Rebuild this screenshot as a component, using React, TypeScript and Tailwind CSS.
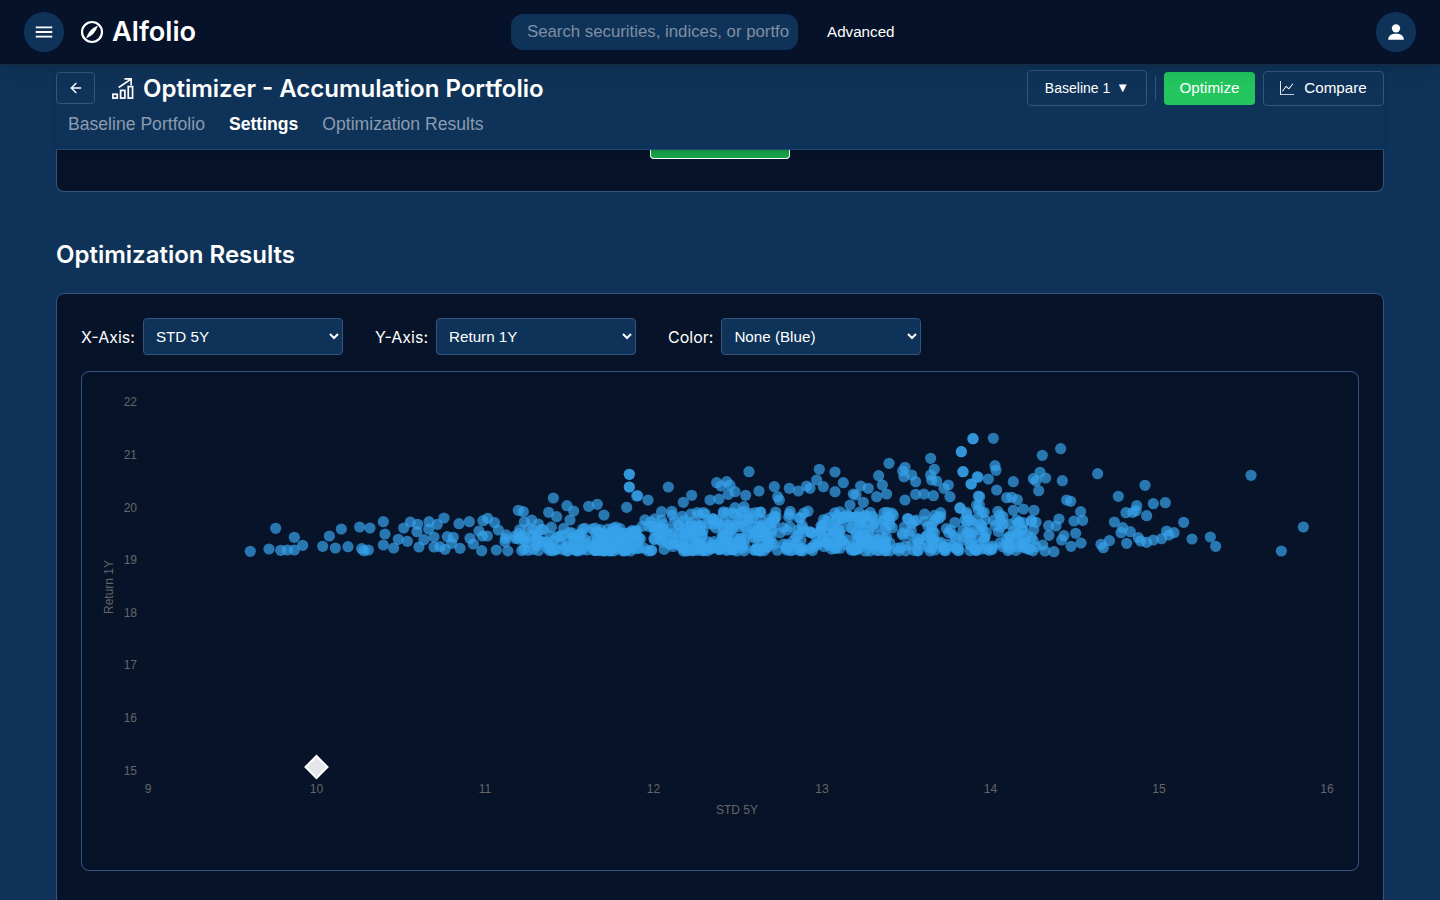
import { ArrowLeft } from "lucide-react";
import { BsGraphUp } from "react-icons/bs";
import { MdMenu } from "react-icons/md";

const xTicks = [
  { x: 148, label: "9" },
  { x: 316.5, label: "10" },
  { x: 485, label: "11" },
  { x: 653.5, label: "12" },
  { x: 822, label: "13" },
  { x: 990.5, label: "14" },
  { x: 1159, label: "15" },
  { x: 1327, label: "16" },
];
const yTicks = [
  { y: 402, label: "22" },
  { y: 455, label: "21" },
  { y: 507.5, label: "20" },
  { y: 560, label: "19" },
  { y: 613, label: "18" },
  { y: 665, label: "17" },
  { y: 718, label: "16" },
  { y: 771, label: "15" },
];

// points read off the picture, per crop: [crop x, crop y]
const left = [[31,394],[87,387],[122,391],[142,390],[163,390],[188,376],[163,352],[107,325],[248,379],[268,348],[304,327],[286,384],[324,380],[365,386],[372,392],[385,390],[359,321],[390,324],[430,305],[435,342],[430,375],[461,384],[475,358],[491,324],[511,306],[533,313],[531,335],[502,364],[537,381],[552,359],[567,305],[566,327],[592,313],[612,294],[582,351],[582,381],[657,311],[688,305],[729,302],[743,295],[764,308],[717,333],[775,330],[727,348],[742,348],[769,390],[725,392],[622,350],[640,352],[690,355],[660,385],[615,388],[600,380],[635,370],[700,372],[835,271],[850,275],[926,277],[940,234],[981,257],[1001,273],[1046,259],[1072,253],[1092,285],[1168,163],[1168,201],[1190,228],[1160,262],[950,290],[990,300],[853,306],[875,300],[895,312]];
const middle = [[28,148],[28,186],[53,212],[84,225],[145,186],[190,232],[215,211],[387,140],[290,173],[320,170],[303,183],[330,180],[345,200],[325,208],[297,222],[270,225],[377,211],[417,198],[372,245],[345,248],[463,185],[473,215],[478,225],[508,190],[535,198],[560,183],[570,190],[598,133],[590,165],[645,141],[670,173],[610,185],[645,200],[700,207],[722,183],[745,190],[708,210],[776,152],[787,180],[807,115],[800,207],[770,215],[730,232],[690,240],[855,127],[848,138],[875,150],[852,155],[887,170],[887,208],[912,207],[940,212],[855,225],[932,100],[943,133],[932,150],[935,165],[950,168],[1059,41],[1024,80],[1029,140],[1053,177],[1072,155],[985,180],[972,190],[990,215],[1075,213],[1020,248],[1070,240]];
const right = [[69,41],[130,40],[34,80],[39,140],[135,122],[138,136],[84,157],[115,162],[64,177],[190,170],[140,195],[89,215],[170,218],[185,217],[202,224],[250,161],[270,142],[287,159],[258,168],[266,197],[277,91],[332,71],[337,167],[443,146],[350,225],[362,229],[392,260],[252,256],[220,252],[190,256],[30,250],[88,240],[85,255],[150,270],[152,285],[327,282],[372,288],[398,286],[105,285],[90,298],[258,292],[296,302],[318,303],[377,325],[393,354],[363,364],[342,332],[335,345],[297,331],[312,380],[285,378],[278,360],[258,365],[222,368],[175,365],[125,370],[95,372],[75,375],[20,370],[505,214],[585,181],[560,242],[610,236],[646,233],[528,263],[548,262],[558,257],[590,272],[493,291],[518,308],[513,323],[541,320],[530,355],[478,347],[453,358],[460,368],[565,338],[572,348],[590,352],[610,345],[635,341],[650,318],[657,330],[672,323],[701,292],[726,342],[781,336],[797,364],[903,151],[1060,306],[994,378],[50,290],[45,285],[200,285],[205,295],[170,340],[200,325],[40,345]];

function rng(seed: number) {
  let s = seed;
  return () => {
    s = (s + 0x6d2b79f5) | 0;
    let t = Math.imul(s ^ (s >>> 15), 1 | s);
    t = (t + Math.imul(t ^ (t >>> 7), 61 | t)) ^ t;
    return ((t ^ (t >>> 14)) >>> 0) / 4294967296;
  };
}

function density(x: number) {
  if (x < 590) return 0.35;
  if (x < 640) return 0.7;
  if (x < 680) return 0.45;
  if (x < 770) return 0.8;
  if (x < 835) return 0.5;
  if (x < 895) return 0.8;
  return 0.38;
}

function buildPoints() {
  const pts = [
    ...left.map(([x, y]) => [240 + x / 3, 420 + y / 3]),
    ...middle.map(([x, y]) => [620 + x / 3, 425 + y / 3]),
    ...right.map(([x, y]) => [950 + x / 3, 425 + y / 3]),
  ];
  const rand = rng(42);
  // the dense band along the bottom
  for (let i = 0; i < 1300; i++) {
    const x = 505 + rand() * 530;
    if (rand() > density(x)) continue;
    const h = x < 640 ? 24 : 40;
    pts.push([x, 551 - Math.pow(rand(), 1.5) * h]);
  }
  return pts;
}

const points = buildPoints();

function ScatterChart() {
  return (
    <svg viewBox="82 372 1276 498" className="block w-full h-[498px]">
      {xTicks.map((t) => (
        <g key={t.label}>
          <line x1={t.x} x2={t.x} y1={402} y2={778} stroke="#000" strokeOpacity={0.1} />
          <text x={t.x} y={793} textAnchor="middle" fontSize={12} fill="#666" fontFamily="Liberation Sans">
            {t.label}
          </text>
        </g>
      ))}
      {yTicks.map((t) => (
        <g key={t.label}>
          <line x1={141} x2={1327} y1={t.y} y2={t.y} stroke="#000" strokeOpacity={0.1} />
          <text x={137} y={t.y + 4} textAnchor="end" fontSize={12} fill="#666" fontFamily="Liberation Sans">
            {t.label}
          </text>
        </g>
      ))}
      <text x={737} y={814} textAnchor="middle" fontSize={12} fill="#666" fontFamily="Liberation Sans">
        STD 5Y
      </text>
      <text
        transform="translate(113 587) rotate(-90)"
        textAnchor="middle"
        fontSize={12}
        fill="#666"
        fontFamily="Liberation Sans"
      >
        Return 1Y
      </text>
      {points.map(([x, y], i) => (
        <circle key={i} cx={x} cy={y} r={5.6} fill="#36a2eb" fillOpacity={0.7} />
      ))}
      <polygon points="316.5,756 327.5,767 316.5,778 305.5,767" fill="#e5e7eb" stroke="#fff" strokeWidth={2} />
    </svg>
  );
}

function AxisSelect({ label, value }: { label: string; value: string }) {
  return (
    <div className="flex items-center gap-2">
      <label className="text-base text-white">{label}</label>
      <select
        defaultValue={value}
        className="w-[200px] h-[37px] px-2 rounded bg-[#0f3358] border border-[#35557f] text-[15.2px] text-white font-['Liberation_Sans',sans-serif]"
      >
        <option>{value}</option>
      </select>
    </div>
  );
}

export default function App() {
  return (
    <div className="h-screen overflow-hidden bg-[#0f3358] text-white font-['Inter',sans-serif]">
      {/* Navbar */}
      <nav className="relative z-10 h-[65px] flex items-center px-6 bg-[#06112a] border-b border-[#1a2a40] shadow-lg">
        <button className="w-10 h-10 rounded-full bg-[#0f3358] flex items-center justify-center">
          <MdMenu size={22} />
        </button>
        <svg width="24" height="24" viewBox="0 0 24 24" className="ml-[16px]">
          <circle cx="12" cy="12" r="10" fill="none" stroke="#fff" strokeWidth="2.2" />
          <path d="M18 5.5 Q9 9 6 18.5 Q15 15 18 5.5Z" fill="#fff" />
        </svg>
        <span className="ml-2 w-[84px] text-[27.2px] font-semibold">Alfolio</span>
        <input
          placeholder="Search securities, indices, or portfolios"
          className="ml-[315px] w-[287px] h-9 pl-4 pr-2 rounded-xl bg-[#0f3358] text-[16.8px] font-['Liberation_Sans',sans-serif] outline-none placeholder:text-[#7f8ea3]"
        />
        <span className="ml-[29px] text-[15.2px] font-medium font-['Liberation_Sans',sans-serif]">Advanced</span>
        <button className="ml-auto w-10 h-10 rounded-full bg-[#0f3358] flex items-center justify-center">
          <svg width="22" height="22" viewBox="0 0 24 24" fill="#fff">
            <circle cx="12" cy="8" r="4.5" />
            <path d="M3.5 20c0-4 3.8-6 8.5-6s8.5 2 8.5 6v.5h-17z" />
          </svg>
        </button>
      </nav>

      <div className="mx-14">
        <div className="relative z-[5] h-[85px] bg-[#0f3358] border-b border-[#1f4a78] shadow-md">
          <div className="flex items-start pt-[5px]">
            <button className="mt-[2px] w-[39px] h-8 rounded border border-[#35557f] flex items-center justify-center">
              <ArrowLeft size={16} />
            </button>
            <svg width="23" height="23" viewBox="0 0 24 24" className="ml-[16px] mt-[7px]" fill="none" stroke="#fff" strokeWidth="1.8">
              <rect x="2" y="18" width="4.5" height="4" />
              <rect x="10" y="14" width="4.5" height="8" />
              <rect x="18" y="10" width="4.5" height="12" />
              <path d="M8 11 20.5 2.5M14 2h7v6.5" />
            </svg>
            <h1 className="ml-[9px] mt-[1px] text-2xl leading-9 font-semibold">Optimizer - Accumulation Portfolio</h1>
            <div className="ml-auto flex items-center font-['Liberation_Sans',sans-serif]">
              <button className="w-[120px] h-9 rounded border border-[#35557f] text-sm flex items-center justify-center gap-1.5">
                Baseline 1<span className="text-[13px]">▼</span>
              </button>
              <div className="mx-2 w-px h-6 bg-[#35557f]" />
              <button className="w-[91px] h-[33px] rounded bg-[#22c55e] text-[15.2px]">Optimize</button>
              <button className="ml-2 w-[121px] h-[35px] rounded border border-[#35557f] text-[15.2px] flex items-center justify-center gap-2.5">
                <BsGraphUp size={14} />
                Compare
              </button>
            </div>
          </div>
          <div className="flex gap-6 pl-3 mt-[3px] text-[17.6px] leading-7 text-[#8a9bb0] font-['Liberation_Sans',sans-serif]">
            <span>Baseline Portfolio</span>
            <span className="font-bold text-white">Settings</span>
            <span>Optimization Results</span>
          </div>
        </div>

        {/* Previous card, scrolled under the header */}
        <div className="h-[42px] bg-[#071329] border-x border-b border-[#35557f] rounded-b-lg flex justify-center items-start">
          <div className="w-[140px] h-[9px] bg-[#16a34a] border-x border-b border-white rounded-b" />
        </div>

        <h2 className="mt-[47px] text-2xl leading-8 font-semibold">Optimization Results</h2>

        {/* Results card */}
        <div className="mt-[22px] p-6 h-[640px] bg-[#071329] border border-[#35557f] rounded-lg">
          <div className="flex items-center gap-8">
            <AxisSelect label="X-Axis:" value="STD 5Y" />
            <AxisSelect label="Y-Axis:" value="Return 1Y" />
            <AxisSelect label="Color:" value="None (Blue)" />
          </div>
          <div className="mt-4 h-[500px] border border-[#35557f] rounded-lg">
            <ScatterChart />
          </div>
        </div>
      </div>
    </div>
  );
}
